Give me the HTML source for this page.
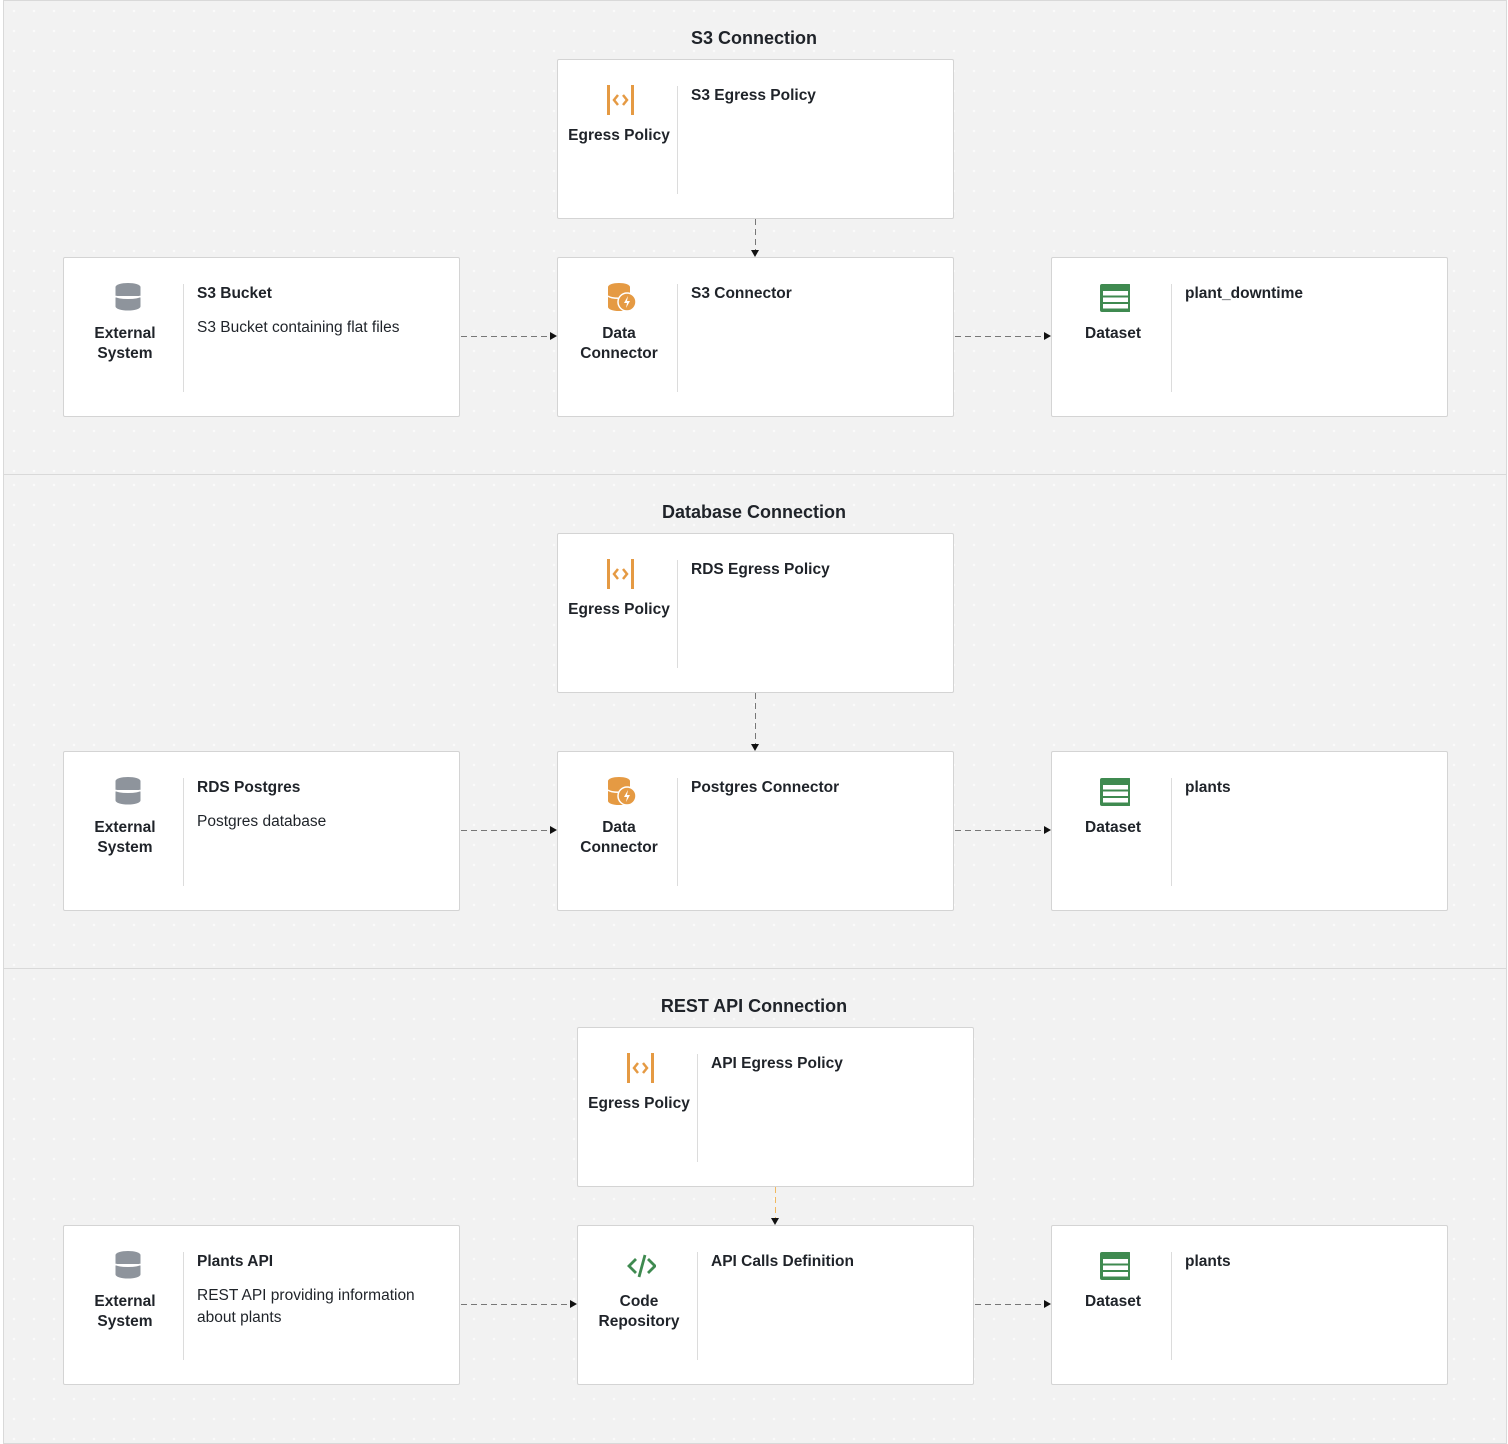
<!DOCTYPE html>
<html><head><meta charset="utf-8"><style>
*{margin:0;padding:0;box-sizing:border-box}
body{width:1508px;height:1444px;background:#fff;position:relative;overflow:hidden;font-family:"Liberation Sans",sans-serif;color:#1f2329}
.sec{position:absolute;left:3px;width:1504px;background:#f2f2f2;border:1px solid #d9d9d9;
background-image:radial-gradient(circle,#fafafa 1px,transparent 1.5px);background-size:20px 20px}
.st{position:absolute;left:0;width:1508px;text-align:center;font-weight:bold;font-size:18px;}
.box{position:absolute;width:397px;height:160px;background:#fff;border:1px solid #d4d4d4;border-radius:2px}
.ic{position:absolute;left:0;top:0;width:120px;text-align:center}
.ic svg{position:absolute;top:24px;left:46px}
.lb{position:absolute;top:66px;left:1px;width:120px;text-align:center;font-weight:bold;font-size:15.5px;line-height:20px}
.dv{position:absolute;left:119px;top:26px;width:1px;height:108px;background:#dcdcdc}
.t{position:absolute;left:133px;top:27px;font-weight:bold;font-size:15.5px}
.d{position:absolute;left:133px;top:59px;font-size:15.5px;line-height:22px;width:250px}
.h{position:absolute;height:1.3px;background:repeating-linear-gradient(90deg,#777 0 6px,transparent 6px 10px)}
.v{position:absolute;width:1.3px;background:repeating-linear-gradient(180deg,#777 0 6px,transparent 6px 10px)}
.v.o{background:repeating-linear-gradient(180deg,#f0b860 0 6px,transparent 6px 10px)}
.ar{position:absolute;width:0;height:0}
.ar.r{border-top:4px solid transparent;border-bottom:4px solid transparent;border-left:7px solid #111}
.ar.d{border-left:4px solid transparent;border-right:4px solid transparent;border-top:7px solid #111}
</style></head><body>

<div class="sec" style="top:0;height:475px"></div>
<div class="sec" style="top:474px;height:495px"></div>
<div class="sec" style="top:968px;height:476px"></div>

<div class="st" style="top:28px">S3 Connection</div>
<div class="st" style="top:502px">Database Connection</div>
<div class="st" style="top:996px">REST API Connection</div>

<!-- SECTION 1 -->
<div class="box" style="left:557px;top:59px">
<div class="ic"><svg width="32" height="32" viewBox="0 0 32 32"><rect x="3" y="1" width="3" height="30" fill="#e59a43"/><rect x="27" y="1" width="3" height="30" fill="#e59a43"/><path d="M14 11l-4 5 4 5M19 11l4 5-4 5" stroke="#e59a43" stroke-width="2.5" fill="none"/></svg><div class="lb" style="top:66px">Egress Policy</div></div>
<div class="dv"></div><div class="t">S3 Egress Policy</div></div>

<div class="box" style="left:63px;top:257px">
<div class="ic"><svg width="32" height="32" viewBox="0 0 32 32"><ellipse cx="18" cy="5" rx="12.5" ry="4" fill="#8e949c"/><rect x="5.5" y="5" width="25" height="9" fill="#8e949c"/><rect x="5.5" y="15.5" width="25" height="9" fill="#8e949c"/><ellipse cx="18" cy="24.5" rx="12.5" ry="4" fill="#8e949c"/><path d="M5.5 14c3 3 22 3 25 0" stroke="#fff" stroke-width="1.5" fill="none"/></svg><div class="lb">External<br>System</div></div>
<div class="dv"></div><div class="t">S3 Bucket</div><div class="d">S3 Bucket containing flat files</div></div>

<div class="box" style="left:557px;top:257px">
<div class="ic"><svg width="32" height="32" viewBox="0 0 32 32"><ellipse cx="15" cy="5" rx="11" ry="4" fill="#e59a43"/><rect x="4" y="5" width="22" height="20" fill="#e59a43"/><ellipse cx="15" cy="25" rx="11" ry="4" fill="#e59a43"/><path d="M4 14c3 3 19 3 22 0" stroke="#fff" stroke-width="1.5" fill="none"/><circle cx="23" cy="20" r="9" fill="#e59a43" stroke="#fff" stroke-width="1.5"/><path d="M24 14l-4 7h3l-1 5 4-7h-3z" fill="#fff"/></svg><div class="lb">Data<br>Connector</div></div>
<div class="dv"></div><div class="t">S3 Connector</div></div>

<div class="box" style="left:1051px;top:257px">
<div class="ic"><svg width="32" height="32" viewBox="0 0 32 32"><rect x="2" y="2" width="31" height="28" rx="2" fill="#3f8a50"/><rect x="5" y="9" width="25" height="4.5" fill="#fff"/><rect x="5" y="15.5" width="25" height="4.5" fill="#fff"/><rect x="5" y="22" width="25" height="4.5" fill="#fff"/></svg><div class="lb">Dataset</div></div>
<div class="dv"></div><div class="t">plant_downtime</div></div>

<div class="v" style="left:755px;top:219px;height:32px"></div><div class="ar d" style="left:751px;top:250px"></div>
<div class="h" style="left:461px;top:336px;width:88px"></div><div class="ar r" style="left:550px;top:332px"></div>
<div class="h" style="left:955px;top:336px;width:89px"></div><div class="ar r" style="left:1044px;top:332px"></div>

<!-- SECTION 2 -->
<div class="box" style="left:557px;top:533px">
<div class="ic"><svg width="32" height="32" viewBox="0 0 32 32"><rect x="3" y="1" width="3" height="30" fill="#e59a43"/><rect x="27" y="1" width="3" height="30" fill="#e59a43"/><path d="M14 11l-4 5 4 5M19 11l4 5-4 5" stroke="#e59a43" stroke-width="2.5" fill="none"/></svg><div class="lb" style="top:66px">Egress Policy</div></div>
<div class="dv"></div><div class="t">RDS Egress Policy</div></div>

<div class="box" style="left:63px;top:751px">
<div class="ic"><svg width="32" height="32" viewBox="0 0 32 32"><ellipse cx="18" cy="5" rx="12.5" ry="4" fill="#8e949c"/><rect x="5.5" y="5" width="25" height="9" fill="#8e949c"/><rect x="5.5" y="15.5" width="25" height="9" fill="#8e949c"/><ellipse cx="18" cy="24.5" rx="12.5" ry="4" fill="#8e949c"/><path d="M5.5 14c3 3 22 3 25 0" stroke="#fff" stroke-width="1.5" fill="none"/></svg><div class="lb">External<br>System</div></div>
<div class="dv"></div><div class="t">RDS Postgres</div><div class="d">Postgres database</div></div>

<div class="box" style="left:557px;top:751px">
<div class="ic"><svg width="32" height="32" viewBox="0 0 32 32"><ellipse cx="15" cy="5" rx="11" ry="4" fill="#e59a43"/><rect x="4" y="5" width="22" height="20" fill="#e59a43"/><ellipse cx="15" cy="25" rx="11" ry="4" fill="#e59a43"/><path d="M4 14c3 3 19 3 22 0" stroke="#fff" stroke-width="1.5" fill="none"/><circle cx="23" cy="20" r="9" fill="#e59a43" stroke="#fff" stroke-width="1.5"/><path d="M24 14l-4 7h3l-1 5 4-7h-3z" fill="#fff"/></svg><div class="lb">Data<br>Connector</div></div>
<div class="dv"></div><div class="t">Postgres Connector</div></div>

<div class="box" style="left:1051px;top:751px">
<div class="ic"><svg width="32" height="32" viewBox="0 0 32 32"><rect x="2" y="2" width="31" height="28" rx="2" fill="#3f8a50"/><rect x="5" y="9" width="25" height="4.5" fill="#fff"/><rect x="5" y="15.5" width="25" height="4.5" fill="#fff"/><rect x="5" y="22" width="25" height="4.5" fill="#fff"/></svg><div class="lb">Dataset</div></div>
<div class="dv"></div><div class="t">plants</div></div>

<div class="v" style="left:755px;top:693px;height:52px"></div><div class="ar d" style="left:751px;top:744px"></div>
<div class="h" style="left:461px;top:830px;width:88px"></div><div class="ar r" style="left:550px;top:826px"></div>
<div class="h" style="left:955px;top:830px;width:89px"></div><div class="ar r" style="left:1044px;top:826px"></div>

<!-- SECTION 3 -->
<div class="box" style="left:577px;top:1027px">
<div class="ic"><svg width="32" height="32" viewBox="0 0 32 32"><rect x="3" y="1" width="3" height="30" fill="#e59a43"/><rect x="27" y="1" width="3" height="30" fill="#e59a43"/><path d="M14 11l-4 5 4 5M19 11l4 5-4 5" stroke="#e59a43" stroke-width="2.5" fill="none"/></svg><div class="lb" style="top:66px">Egress Policy</div></div>
<div class="dv"></div><div class="t">API Egress Policy</div></div>

<div class="box" style="left:63px;top:1225px">
<div class="ic"><svg width="32" height="32" viewBox="0 0 32 32"><ellipse cx="18" cy="5" rx="12.5" ry="4" fill="#8e949c"/><rect x="5.5" y="5" width="25" height="9" fill="#8e949c"/><rect x="5.5" y="15.5" width="25" height="9" fill="#8e949c"/><ellipse cx="18" cy="24.5" rx="12.5" ry="4" fill="#8e949c"/><path d="M5.5 14c3 3 22 3 25 0" stroke="#fff" stroke-width="1.5" fill="none"/></svg><div class="lb">External<br>System</div></div>
<div class="dv"></div><div class="t">Plants API</div><div class="d">REST API providing information about plants</div></div>

<div class="box" style="left:577px;top:1225px">
<div class="ic"><svg width="32" height="32" viewBox="0 0 32 32"><path d="M12 9l-7 7 7 7M24 9l7 7-7 7M21 5l-6 22" stroke="#3f8a50" stroke-width="2.8" fill="none"/></svg><div class="lb">Code<br>Repository</div></div>
<div class="dv"></div><div class="t">API Calls Definition</div></div>

<div class="box" style="left:1051px;top:1225px">
<div class="ic"><svg width="32" height="32" viewBox="0 0 32 32"><rect x="2" y="2" width="31" height="28" rx="2" fill="#3f8a50"/><rect x="5" y="9" width="25" height="4.5" fill="#fff"/><rect x="5" y="15.5" width="25" height="4.5" fill="#fff"/><rect x="5" y="22" width="25" height="4.5" fill="#fff"/></svg><div class="lb">Dataset</div></div>
<div class="dv"></div><div class="t">plants</div></div>

<div class="v o" style="left:775px;top:1187px;height:32px"></div><div class="ar d" style="left:771px;top:1218px"></div>
<div class="h" style="left:461px;top:1304px;width:108px"></div><div class="ar r" style="left:570px;top:1300px"></div>
<div class="h" style="left:975px;top:1304px;width:69px"></div><div class="ar r" style="left:1044px;top:1300px"></div>

</body></html>
